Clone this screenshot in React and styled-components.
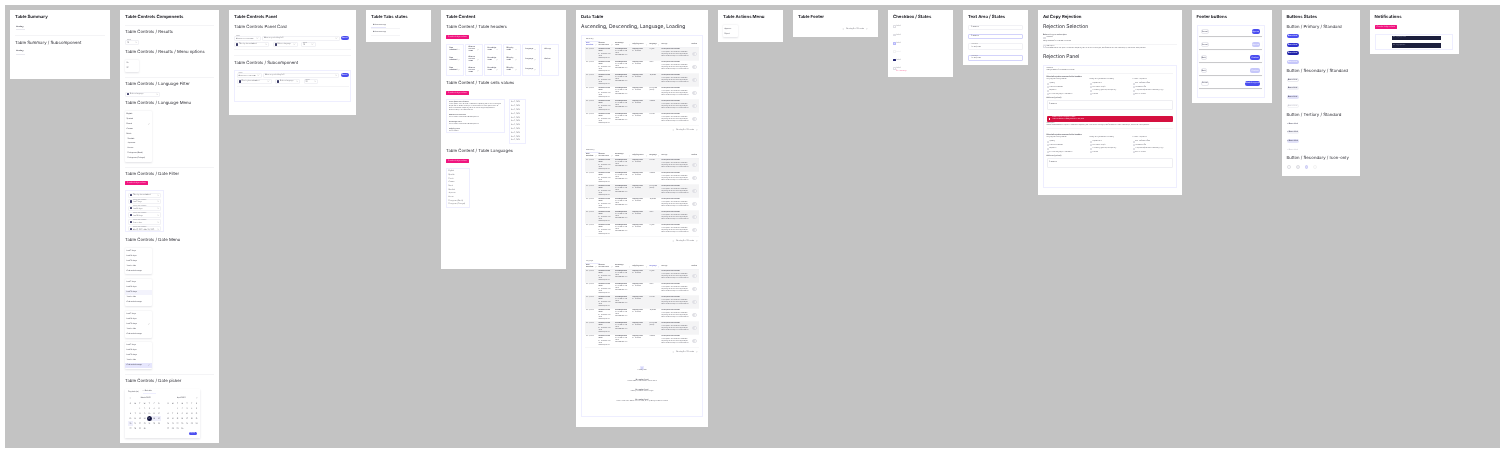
import React from 'react';
import styled, { createGlobalStyle, css } from 'styled-components';
import { ChevronDown, ChevronLeft, ChevronRight, Check, MoreHorizontal, Loader } from 'lucide-react';

const Global = createGlobalStyle`
  html, body { margin: 0; padding: 0; background: #fff; overflow: hidden; }
  * { box-sizing: border-box; }
  body {
    font-family: Inter, "Liberation Sans", sans-serif;
    color: #1b1b22;
    text-rendering: geometricPrecision;
  }
`;

const LAVENDER = '#eeeeff';
const BLUE = '#4a4df0';
const PINK = '#f0157f';
const INK = '#1c1f3d';
const SMALL = '#32323e';

const top = css`
  margin-top: ${(p) => p.$mt || 0}px;
`;

// the whole board is a zoomed out design file, so everything sits slightly soft
const Canvas = styled.main`
  margin: 5px;
  width: 1495px;
  height: 443px;
  padding: 5px;
  background: #c3c3c3;
  display: flex;
  gap: 10px;
  align-items: flex-start;
  overflow: hidden;
  filter: blur(0.3px);
`;
const Frame = styled.section`
  width: ${(p) => p.$w}px;
  height: ${(p) => p.$h}px;
  flex: none;
  padding: 5px;
  background: #fff;
  display: flex;
  flex-direction: column;
  align-items: flex-start;
`;
const Title = styled.h2`
  margin: 0;
  font-size: 4.3px;
  line-height: 5px;
  font-weight: 700;
  white-space: nowrap;
`;
const Section = styled.h3`
  ${top}
  margin-bottom: 0;
  font-size: 4.3px;
  line-height: 5px;
  font-weight: 400;
  color: #2c2c34;
  white-space: nowrap;
`;
const BigSection = styled(Section)`
  font-size: 5px;
`;
const Rule = styled.hr`
  ${top}
  margin-bottom: 0;
  margin-left: 0;
  margin-right: 0;
  border: 0;
  height: 1px;
  width: ${(p) => (p.$w ? `${p.$w}px` : '100%')};
  flex: none;
  background: #f4f4f6;
`;
const Mini = styled.span`
  ${top}
  display: block;
  padding-left: ${(p) => p.$indent || 0}px;
  font-size: ${(p) => p.$size || 1.7}px;
  line-height: ${(p) => (p.$size || 1.7) + 0.5}px;
  font-weight: ${(p) => (p.$bold ? 600 : 400)};
  color: ${(p) => p.$color || SMALL};
  white-space: nowrap;
`;
const Wrap = styled(Mini)`
  white-space: normal;
`;

const NoteTag = styled.div`
  ${top}
  width: 22.5px;
  height: 4px;
  flex: none;
  padding: 0 2px;
  border-radius: 0.5px;
  background: ${PINK};
  display: flex;
  align-items: center;
  gap: 1px;
  color: #fff;
  font-size: 1.6px;
  white-space: nowrap;
`;

const SelectShell = styled.div`
  ${top}
  width: ${(p) => p.$w}px;
  height: ${(p) => p.$h || 5}px;
  flex: none;
  padding: 0 1px;
  background: #fff;
  border: 1px solid #f1f1f5;
  border-radius: 1px;
  display: flex;
  align-items: center;
  gap: 1px;
  svg { flex: none; }
`;
const SelectCopy = styled.div`
  flex: 1;
  min-width: 0;
`;
const CalendarDot = styled.span`
  width: 2px;
  height: 2.2px;
  flex: none;
  border-radius: 0.4px;
  background: #3a3a66;
`;
function Select({ w, h, mt, label, value, dot }) {
  return (
    <SelectShell $w={w} $h={h} $mt={mt}>
      {dot && <CalendarDot />}
      <SelectCopy>
        {label && <Mini $size={1.2} $color="#777782">{label}</Mini>}
        <Mini $size={1.6}>{value}</Mini>
      </SelectCopy>
      <ChevronDown size={2.4} strokeWidth={2} color="#555" />
    </SelectShell>
  );
}

const MenuCard = styled.div`
  ${top}
  width: ${(p) => p.$w}px;
  height: ${(p) => p.$h}px;
  flex: none;
  padding: 1px 0;
  background: #fff;
  border-radius: 1px;
  box-shadow: 0 0.5px 2px rgba(40, 40, 70, 0.14);
  display: flex;
  flex-direction: column;
`;
const MenuItem = styled.div`
  flex: 1;
  padding: 0 1.5px;
  padding-left: ${(p) => (p.$indent ? 2.5 : 1.5)}px;
  display: flex;
  align-items: center;
  justify-content: space-between;
  font-size: 1.7px;
  color: ${SMALL};
  white-space: nowrap;
  background: ${(p) => (p.$state === 'active' ? '#e6e6fd' : p.$state === 'hover' ? '#f3f3fc' : 'transparent')};
`;
function Menu({ w, h, mt, items, hover, active, checked, indentFrom }) {
  return (
    <MenuCard $w={w} $h={h} $mt={mt}>
      {items.map((item, i) => (
        <MenuItem key={item} $indent={indentFrom !== undefined && i >= indentFrom} $state={i === active ? 'active' : i === hover ? 'hover' : ''}>
          {item}
          {(i === checked || i === active) && <Check size={2} strokeWidth={2} color="#555" />}
        </MenuItem>
      ))}
    </MenuCard>
  );
}

const OutlineBox = styled.div`
  ${top}
  width: ${(p) => (p.$w ? `${p.$w}px` : '100%')};
  height: ${(p) => p.$h}px;
  flex: none;
  padding: ${(p) => p.$pad ?? 2}px;
  border: 1px solid ${LAVENDER};
  display: flex;
  flex-direction: column;
  align-items: flex-start;
`;

// table summary
const SummaryBlock = styled.div`
  ${top}
  padding: 0 1px;
`;
const SummaryLine = styled.div`
  margin-top: 1px;
  width: ${(p) => p.$w || 9}px;
  height: 1px;
  flex: none;
  background: ${(p) => p.$color || '#e8e8ee'};
`;
function Summary({ mt }) {
  return (
    <SummaryBlock $mt={mt}>
      <Mini $size={1.8} $bold>Heading</Mini>
      <SummaryLine />
    </SummaryBlock>
  );
}

// date picker
const Picker = styled.div`
  ${top}
  width: 74.5px;
  height: 49.5px;
  flex: none;
  padding: 2px 3px;
  background: #fff;
  box-shadow: 0 0.5px 2px rgba(40, 40, 70, 0.14);
  display: flex;
  flex-direction: column;
`;
const PickerTabs = styled.div`
  display: flex;
  gap: 4px;
  height: 3px;
  align-items: center;
`;
const PickerTab = styled.div`
  padding-bottom: 0.4px;
  border-bottom: ${(p) => (p.$on ? `1px solid ${LAVENDER}` : '0')};
  font-size: 1.7px;
  color: ${SMALL};
  white-space: nowrap;
`;
const Months = styled.div`
  margin-top: 3px;
  display: flex;
  gap: 4.4px;
`;
const Month = styled.div`
  width: 33.3px;
`;
const MonthHead = styled.div`
  height: 3px;
  padding: 0 1px;
  display: flex;
  align-items: center;
  justify-content: space-between;
  font-size: 1.7px;
  color: ${SMALL};
`;
const Days = styled.div`
  margin-top: 1.7px;
  display: grid;
  grid-template-columns: repeat(7, 4.75px);
  grid-auto-rows: 5px;
`;
const Day = styled.div`
  display: flex;
  align-items: center;
  justify-content: center;
  font-size: 1.6px;
  color: ${(p) => (p.$kind === 'start' ? '#fff' : SMALL)};
  background: ${(p) => (p.$kind === 'range' ? '#f0f0fc' : 'transparent')};
  ${(p) => p.$kind === 'start' && css`
    background: #10123d;
    border-radius: 50%;
  `}
`;
const PickerFoot = styled.div`
  margin-top: 0.5px;
  display: flex;
  justify-content: flex-end;
`;
const PICK_WEEK = ['S', 'M', 'T', 'W', 'T', 'F', 'S'];
function CalendarMonth({ name, picked, left }) {
  const cells = [null, null, ...Array.from({ length: 30 }, (_, i) => i + 1)];
  return (
    <Month>
      <MonthHead>
        {left ? <ChevronLeft size={2} /> : <span />}
        <span>{name}</span>
        {!left ? <ChevronRight size={2} /> : <span />}
      </MonthHead>
      <Days>
        {PICK_WEEK.map((d, i) => <Day key={i}>{d}</Day>)}
        {cells.map((d, i) => {
          let kind = '';
          if (picked && d === 17) kind = 'start';
          if (picked && (d === 18 || d === 19 || d === 20)) kind = 'range';
          return <Day key={i} $kind={kind}>{d}</Day>;
        })}
      </Days>
    </Month>
  );
}

// buttons
const kinds = {
  primary: 'background:#4a4df0;color:#fff;',
  primaryHover: 'background:#2f32cf;color:#fff;',
  primaryPress: 'background:#1f22a8;color:#fff;',
  primaryOff: 'background:#c6c7fa;color:#fff;',
  secondary: 'background:#fff;color:#2e2e48;border:1px solid #e8e8ee;',
  secondaryHover: 'background:#f1f1f7;color:#2e2e48;',
  secondaryPress: 'background:#e2e2f8;color:#2e2e48;',
  secondaryOff: 'background:#fff;color:#b9b9c4;border:1px solid #f3f3f6;',
  tertiary: 'background:#fff;color:#2e2e48;',
  tertiaryHover: 'background:#f3f3f8;color:#2e2e48;',
  tertiaryPress: 'background:#e2e2f8;color:#2e2e48;',
  tertiaryOff: 'background:#fff;color:#b9b9c4;',
};
const Button = styled.div`
  ${top}
  width: ${(p) => p.$w || 12}px;
  height: ${(p) => p.$h || 4}px;
  flex: none;
  border-radius: 2px;
  display: flex;
  align-items: center;
  justify-content: center;
  font-size: 1.6px;
  font-weight: 600;
  white-space: nowrap;
  ${(p) => kinds[p.$kind]}
`;
const IconRow = styled.div`
  ${top}
  display: flex;
  gap: 5px;
  padding-left: 0.5px;
`;
const IconButton = styled.div`
  width: 3.8px;
  height: 3.8px;
  border-radius: 50%;
  border: 1px solid ${(p) => p.$line};
  background: ${(p) => p.$fill};
`;

// footer buttons
const FootCard = styled.div`
  ${top}
  width: 62.5px;
  height: 9px;
  flex: none;
  padding: 0 1.5px;
  background: #fff;
  box-shadow: 0 0.7px 0.6px rgba(60, 60, 70, 0.28);
  display: flex;
  align-items: center;
  justify-content: space-between;
`;

// checkbox
const CheckRow = styled.div`
  ${top}
  height: 3px;
  display: flex;
  align-items: center;
  gap: 0.8px;
  position: relative;
`;
const Tick = styled.span`
  width: ${(p) => p.$s || 2.6}px;
  height: ${(p) => p.$s || 2.6}px;
  flex: none;
  border-radius: 0.5px;
  border: 1px solid ${(p) => p.$line || '#dedee4'};
  background: ${(p) => p.$fill || '#fff'};
`;
const ErrorNote = styled.span`
  position: absolute;
  left: 3px;
  top: 2.6px;
  font-size: 1.6px;
  color: #f0417f;
  white-space: nowrap;
`;

// text area
const Field = styled.div`
  ${top}
  width: 55px;
  height: ${(p) => p.$h}px;
  flex: none;
  padding: 0 2px;
  background: #fff;
  border: 1px solid ${(p) => (p.$focus ? '#d3d3fb' : '#f1f1f5')};
  border-radius: 1px;
  display: flex;
  flex-direction: column;
  justify-content: center;
`;

// table
const GRID = '12.5px 16.7px 17.3px 17px 12px 30px 7px';
const TableBlock = styled.div`
  height: 111px;
  flex: none;
  width: 100%;
`;
const TabLabel = styled.div`
  padding-left: 1px;
  width: 15px;
  border-bottom: 1px solid #e9e9fb;
  height: 3px;
`;
const HeadRow = styled.div`
  margin-top: 1.5px;
  height: 5px;
  display: grid;
  grid-template-columns: ${GRID};
  align-items: center;
  border-bottom: 1px solid #f1f1f4;
`;
const HeadCell = styled.div`
  padding-left: 1px;
  display: flex;
  gap: 1px;
  align-items: center;
  font-size: 1.5px;
  line-height: 1.8px;
  font-weight: 600;
  color: ${(p) => (p.$on ? '#3c3cc8' : '#2a2a34')};
  svg { flex: none; margin-left: auto; margin-right: 1px; }
`;
const BodyRow = styled.div`
  height: 13px;
  display: grid;
  grid-template-columns: ${GRID};
  background: ${(p) => (p.$alt ? '#f4f4f5' : '#fff')};
  border-bottom: 1px solid #f7f7f8;
`;
const Cell = styled.div`
  padding: 1.4px 1px 0;
  min-width: 0;
  overflow: hidden;
`;
const ActionCell = styled.div`
  display: flex;
  align-items: center;
  justify-content: center;
  padding-left: 1px;
`;
const RoundAction = styled.div`
  width: 4.5px;
  height: 4.5px;
  border-radius: 50%;
  border: 1px solid #e2e2e8;
  background: #fff;
  display: flex;
  align-items: center;
  justify-content: center;
`;
const Pager = styled.div`
  ${top}
  width: 100%;
  height: 4px;
  display: flex;
  align-items: center;
  gap: 1.4px;
  justify-content: flex-end;
  padding-right: ${(p) => p.$end || 1}px;
  font-size: 1.6px;
  color: ${SMALL};
  white-space: nowrap;
`;
const HEADS = ['Date submitted', 'Abstract account name', 'Knowledge name', 'Shipping name', 'Language', 'Ad copy', 'Actions'];
const COPY = 'Lorem ipsum dolor sit amet consectetur adipiscing elit ut et dolore magna aliqua sed do eiusmod tempor incididunt labore';
function DataTable({ label, langs, sorted }) {
  return (
    <TableBlock>
      <TabLabel><Mini $size={1.5}>{label}</Mini></TabLabel>
      <HeadRow>
        {HEADS.map((h, i) => (
          <HeadCell key={h} $on={i === sorted}>
            <span>{h}</span>
            {i < 5 && <ChevronDown size={1.8} />}
          </HeadCell>
        ))}
      </HeadRow>
      {langs.map((lang, i) => (
        <BodyRow key={i} $alt={i % 2 === 0}>
          <Cell><Mini $size={1.4}>Oct 2, 2024</Mini></Cell>
          <Cell>
            <Wrap $size={1.4} $bold>Abstract account name</Wrap>
            <Wrap $size={1.4} $mt={0.5}>ID: 12345678 Title name ads.example.com</Wrap>
          </Cell>
          <Cell>
            <Wrap $size={1.4} $bold>Knowledge name</Wrap>
            <Wrap $size={1.4}>ID: 12345678 Title name</Wrap>
            <Mini $size={1.4}>www.website.com</Mini>
          </Cell>
          <Cell>
            <Wrap $size={1.4} $bold>Shipping name</Wrap>
            <Wrap $size={1.4}>ID: 12345678</Wrap>
          </Cell>
          <Cell><Wrap $size={1.4}>{lang}</Wrap></Cell>
          <Cell>
            <Mini $size={1.4} $bold>Lorem ipsum dolor sit amet</Mini>
            <Wrap $size={1.4} $mt={0.4}>{COPY}</Wrap>
          </Cell>
          <ActionCell><RoundAction><MoreHorizontal size={2} color="#9a9aa5" /></RoundAction></ActionCell>
        </BodyRow>
      ))}
      <Pager $mt={2}>
        <ChevronLeft size={2} />
        <span>&nbsp;Showing 8 of 20 results&nbsp;</span>
        <ChevronRight size={2} />
      </Pager>
    </TableBlock>
  );
}
const StateLine = styled.div`
  ${top}
  align-self: center;
  text-align: center;
`;
const Spin = styled.div`
  ${top}
  align-self: center;
  height: 4px;
  color: ${BLUE};
  svg { display: block; }
`;

// content frame
const Row = styled.div`
  ${top}
  display: flex;
  align-items: flex-start;
  gap: ${(p) => p.$gap || 0}px;
`;
const HeaderColumn = styled.div`
  width: ${(p) => p.$w || 17.5}px;
  height: 32.5px;
  flex: none;
  padding: 3px 2.5px;
  border: 1px solid ${LAVENDER};
  display: flex;
  flex-direction: column;
  gap: ${(p) => p.$gap || 6}px;
`;
const HeaderChip = styled.div`
  height: 4.5px;
  display: flex;
  align-items: center;
  justify-content: space-between;
  font-size: 1.6px;
  line-height: 1.9px;
  font-weight: 600;
  color: #26263c;
  svg { flex: none; }
`;
const ValueRow = styled.div`
  height: 3.8px;
  display: flex;
  align-items: center;
  font-size: 1.6px;
  color: ${SMALL};
  white-space: nowrap;
`;

// rejection
const ColsRow = styled.div`
  ${top}
  display: grid;
  grid-template-columns: 43px 43px 1fr;
  width: 100%;
`;
const ReasonRow = styled.div`
  margin-top: ${(p) => p.$mt ?? 1.5}px;
  height: 2px;
  display: flex;
  align-items: center;
  gap: 0.8px;
  font-size: 1.5px;
  color: ${SMALL};
  white-space: nowrap;
`;
const Note = styled.div`
  ${top}
  width: 100%;
  height: 10px;
  flex: none;
  padding: 1.5px;
  border: 1px solid #eeeef2;
  border-radius: 1px;
  font-size: 1.6px;
  color: ${SMALL};
`;
const Banner = styled.div`
  ${top}
  width: 100%;
  height: 6px;
  flex: none;
  padding: 0 2px;
  border-radius: 1px;
  background: #d5103f;
  display: flex;
  align-items: center;
  gap: 2px;
  color: #fff;
`;
const BannerMark = styled.span`
  width: 1.8px;
  height: 1.8px;
  flex: none;
  background: #fff;
`;
const Toast = styled.div`
  ${top}
  width: 49px;
  height: 4.5px;
  flex: none;
  margin-left: 15.5px;
  padding: 0 1px;
  background: ${INK};
  display: flex;
  align-items: center;
  font-size: 1.5px;
  color: #b9bbd0;
  white-space: nowrap;
`;

const RESULTS_LANGS = ['English', 'Spanish', 'French', 'German', 'Dutch', 'Swedish', 'Japanese', 'Korean', 'Portuguese (Brazil)', 'Portuguese (Portugal)'];
const DATE_ITEMS = ['Last 7 days', 'Last 14 days', 'Last 30 days', 'Year to date', 'Custom date range'];
const DATE_VALUES = ['Last 7 days', 'Last 14 days', 'Last 30 days', 'Year to date', 'Mar 17, 2022 - Mar 20, 2022'];

const REASONS = [
  ['Language and clarity issues', ['Spelling', 'Grammar mistakes', 'Repetition', 'Incorrect language or translation']],
  ['Quality and guidelines not meeting', ['Capitalization', 'Punctuation and/or', 'Formatting, symbols, and spacing', 'Policies']],
  ['Content compliance', ['Non-verifiable offers', 'Excessive offer', 'Competitors/brands in advertising copy', 'Not on-domain']],
];
function Reasons({ mt }) {
  return (
    <>
      <Mini $mt={mt} $size={1.7} $bold>Select all rejection reasons for the headline</Mini>
      <ColsRow $mt={1.2}>
        {REASONS.map(([head, items]) => (
          <div key={head}>
            <Mini $size={1.5}>{head}</Mini>
            {items.map((r, i) => (
              <ReasonRow key={r} $mt={i === 0 ? 1.6 : 1.5}><Tick $s={2} />{r}</ReasonRow>
            ))}
          </div>
        ))}
      </ColsRow>
      <Mini $mt={2} $size={1.6} $bold>Add note (optional)</Mini>
      <Note $mt={0.8}>Comments</Note>
    </>
  );
}

function ControlsRows({ mt, search = 77.5, account = 26.5, gap = 1.5 }) {
  return (
    <>
      <Row $mt={mt} $gap={gap}>
        <Select w={account} label="Search" value="Abstract account name" />
        <Select w={search} value="What are you looking for?" />
        <Button $w={8} $h={4} $mt={0.5} $kind="primary">Search</Button>
      </Row>
      <Row $mt={1.5} $gap={3.5}>
        <Select w={35} dot value="Filter by date submitted" />
        <Select w={25} dot value="Select a language" />
        <Select w={14.5} label="Results" value="25" />
      </Row>
    </>
  );
}

export default function App() {
  return (
    <>
      <Global />
      <Canvas>
        <Frame $w={100} $h={69}>
          <Title>Table Summary</Title>
          <Summary mt={6} />
          <Rule $mt={5} />
          <Section $mt={5}>Table Summary / Subcomponent</Section>
          <Summary mt={4} />
        </Frame>

        <Frame $w={99} $h={433}>
          <Title>Table Controls Components</Title>
          <Rule $mt={4.5} />
          <Section $mt={4.5}>Table Controls / Results</Section>
          <Select w={14} h={4.5} mt={5} label="Results" value="25" />
          <Section $mt={5}>Table Controls / Results / Menu options</Section>
          <Menu w={14} h={12} mt={5} items={['10', '25']} />
          <Rule $mt={5} />
          <Section $mt={4}>Table Controls / Language Filter</Section>
          <Select w={35} mt={5} dot value="Select a language" />
          <Section $mt={4.5}>Table Controls / Language Menu</Section>
          <Menu w={26.5} h={50.5} mt={5} items={RESULTS_LANGS} checked={2} indentFrom={5} />
          <Rule $mt={5} />
          <Section $mt={4}>Table Controls / Date Filter</Section>
          <NoteTag $mt={4.5}>Contains design variants</NoteTag>
          <OutlineBox $w={39} $h={42} $mt={5} $pad={2}>
            <Select w={33} h={4.5} dot value="Filter by date submitted" />
            {DATE_VALUES.map((v) => (
              <Select key={v} w={33} h={5.5} mt={1.3} dot label="Filter by date submitted" value={v} />
            ))}
          </OutlineBox>
          <Section $mt={5.5}>Table Controls /  Date Menu</Section>
          <Menu w={26.5} h={26.5} mt={5} items={DATE_ITEMS} />
          <Menu w={26.5} h={26.5} mt={5} items={DATE_ITEMS} hover={2} />
          <Menu w={26.5} h={26.5} mt={5.5} items={DATE_ITEMS} checked={2} />
          <Menu w={26.5} h={26.5} mt={4.5} items={DATE_ITEMS} active={4} />
          <Rule $mt={5} />
          <Section $mt={4}>Table Controls / Date picker</Section>
          <Picker $mt={5}>
            <PickerTabs>
              <PickerTab>Plug date (in)</PickerTab>
              <PickerTab $on>&minus;&nbsp; End date &nbsp; &nbsp; &nbsp; &nbsp;</PickerTab>
            </PickerTabs>
            <Months>
              <CalendarMonth name="March 2022" picked left />
              <CalendarMonth name="April 2022" />
            </Months>
            <PickerFoot><Button $w={7.5} $h={3.5} $kind="primary">Apply</Button></PickerFoot>
          </Picker>
        </Frame>

        <Frame $w={127} $h={104.5}>
          <Title>Table Controls Panel</Title>
          <Section $mt={5}>Table Controls Panel Card</Section>
          <ControlsRows mt={5.5} />
          <Rule $mt={1.5} />
          <Rule $mt={5.5} />
          <Section $mt={4.5}>Table Controls / Subcomponent</Section>
          <OutlineBox $mt={4.5} $h={32} $pad={1.5}>
            <ControlsRows account={25} search={76} />
            <Rule $mt={1.5} />
          </OutlineBox>
        </Frame>

        <Frame $w={65} $h={32}>
          <Title>Table Tabs states</Title>
          <Mini $mt={3.5} $size={1.6} $bold $indent={2}>Ad account copy</Mini>
          <SummaryLine $w={15} $color="#e4e4fa" />
          <Rule $mt={0.5} $w={29} />
          <Mini $mt={2} $size={1.6} $bold $indent={2}>Ad account copy</Mini>
          <Rule $mt={2} $w={29} />
        </Frame>

        <Frame $w={125} $h={259}>
          <Title>Table Content</Title>
          <Section $mt={5}>Table Content / Table headers</Section>
          <NoteTag $mt={4.5}>Contains design variants</NoteTag>
          <Row $mt={5} $gap={1.5}>
            {['Date submitted', 'Abstract account name', 'Knowledge name', 'Shipping name', 'Language'].map((h) => (
              <HeaderColumn key={h}>
                {[0, 1, 2].map((i) => <HeaderChip key={i}><span>{h}</span><ChevronDown size={1.8} /></HeaderChip>)}
              </HeaderColumn>
            ))}
            <HeaderColumn $gap={6}>
              <HeaderChip>Ad copy</HeaderChip>
              <HeaderChip>Actions</HeaderChip>
            </HeaderColumn>
          </Row>
          <Section $mt={4.5}>Table Content / Table cells values</Section>
          <NoteTag $mt={5}>Contains design variants</NoteTag>
          <Row $mt={4.5} $gap={4.5}>
            <OutlineBox $w={58.5} $h={34} $pad={2}>
              <Mini $size={1.5} $bold>Lorem ipsum dolor sit amet</Mini>
              <Wrap $size={1.5}>{COPY} {COPY}</Wrap>
              <Mini $mt={2.5} $size={1.5} $bold>Abstract account name</Mini>
              <Mini $size={1.5}>ID: 12345678 Title name ads.example.com</Mini>
              <Mini $mt={3} $size={1.5} $bold>Knowledge name</Mini>
              <Mini $size={1.5}>ID: 12345678 Title name ads.example.com</Mini>
              <Mini $mt={3} $size={1.5} $bold>Shipping name</Mini>
              <Mini $size={1.5}>ID: 12345678</Mini>
            </OutlineBox>
            <OutlineBox $w={17} $h={45} $pad={0.5}>
              {Array.from({ length: 11 }, (_, i) => <ValueRow key={i}>&nbsp;Oct 2, 2024</ValueRow>)}
            </OutlineBox>
          </Row>
          <Section $mt={5}>Table Content / Table Languages</Section>
          <NoteTag $mt={4.5}>Contains design variants</NoteTag>
          <OutlineBox $w={23.5} $h={40.5} $mt={5} $pad={1}>
            {RESULTS_LANGS.map((l) => <ValueRow key={l}>&nbsp;{l}</ValueRow>)}
          </OutlineBox>
        </Frame>

        <Frame $w={132} $h={417}>
          <Title>Data Table</Title>
          <BigSection $mt={5}>Ascending, Descending, Language, Loading</BigSection>
          <OutlineBox $mt={4.5} $h={382} $pad={3}>
            <DataTable label="Ascending" sorted={0} langs={['English', 'Dutch', 'Japanese', 'Portuguese (Brazil)', 'Swedish', 'German']} />
            <DataTable label="Descending" sorted={-1} langs={['German', 'Swedish', 'Portuguese (Brazil)', 'Japanese', 'Dutch', 'English']} />
            <DataTable label="Language" sorted={4} langs={['English', 'Dutch', 'German', 'Japanese', 'Portuguese (Brazil)', 'Swedish']} />
            <Spin $mt={-6}><Loader size={4} strokeWidth={1.5} /></Spin>
            <StateLine><Mini $size={1.5}>Loading data</Mini></StateLine>
            <StateLine $mt={7}>
              <Mini $size={1.6} $bold>No results found</Mini>
              <Mini $size={1.5}>Enter at least 3 characters to find a match</Mini>
            </StateLine>
            <StateLine $mt={6}>
              <Mini $size={1.6} $bold>No results found</Mini>
              <Mini $size={1.5}>Select your search term to begin</Mini>
            </StateLine>
            <StateLine $mt={6}>
              <Mini $size={1.6} $bold>No results found</Mini>
              <Mini $size={1.5}>Enter conditions to search for accounts, fit or update your search criteria</Mini>
            </StateLine>
          </OutlineBox>
        </Frame>

        <Frame $w={65} $h={32}>
          <Title>Table Actions Menu</Title>
          <Menu w={15} h={12} mt={5} items={['Approve', 'Reject']} />
        </Frame>

        <Frame $w={85} $h={27}>
          <Title>Table Footer</Title>
          <Pager $mt={6.5} $end={5}>
            <ChevronLeft size={2} />
            <span>&nbsp;Showing 8 of 20 results&nbsp;</span>
            <ChevronRight size={2} />
          </Pager>
        </Frame>

        <Frame $w={65} $h={67}>
          <Title>Checkbox / States</Title>
          <CheckRow $mt={5}><Tick /><Mini $size={1.6}>Label</Mini></CheckRow>
          <CheckRow $mt={5.4}><Tick $fill="#d9d9e2" /><Mini $size={1.6}>Label</Mini></CheckRow>
          <CheckRow $mt={5.4}><Tick $line="#b7b8fa" $fill="#dcdcfb" /><Mini $size={1.6}>Label</Mini></CheckRow>
          <CheckRow $mt={5.4}><Tick $line="#f3f3f3" /><Mini $size={1.6} $color="#c9c9cf">Label</Mini></CheckRow>
          <CheckRow $mt={5.4}><Tick $line="#1f2170" $fill="#1f2170" /><Mini $size={1.6}>Label</Mini></CheckRow>
          <CheckRow $mt={5.4}><Tick /><Mini $size={1.6}>Label</Mini><ErrorNote>Error message</ErrorNote></CheckRow>
        </Frame>

        <Frame $w={65} $h={55}>
          <Title>Text Area / States</Title>
          <Field $mt={4.5} $h={5}><Mini $size={1.6}>Comments</Mini></Field>
          <Field $mt={4} $h={5} $focus><Mini $size={1.6}>Comments</Mini></Field>
          <Field $mt={4.5} $h={6.5}><Mini $size={1.3} $color="#888">Comments</Mini><Mini $size={1.6}>Lorem ipsum</Mini></Field>
          <Field $mt={5} $h={6} $focus><Mini $size={1.3} $color="#888">Comments</Mini><Mini $size={1.6}>Lorem ipsum</Mini></Field>
        </Frame>

        <Frame $w={143.5} $h={185}>
          <Title>Ad Copy Rejection</Title>
          <BigSection $mt={5}>Rejection Selection</BigSection>
          <Mini $mt={3.6} $size={1.6} $bold>Select ad copy to review reject</Mini>
          <CheckRow $mt={1}><Tick /><Mini $size={1.5}>Headline</Mini></CheckRow>
          <Mini $mt={1} $size={1.5}>Ready Answers for business in minutes</Mini>
          <Rule $mt={1} />
          <CheckRow $mt={0.5}><Tick /><Mini $size={1.5}>Description</Mini></CheckRow>
          <Mini $size={1.5}>Instant answers when it's quiet. Consectetur adipiscing elit. Sit et et dolore magna, sed facilisi eros. Etiam nulla tempor, sollicitudin vitae pharetra.</Mini>
          <BigSection $mt={4.5}>Rejection Panel</BigSection>
          <OutlineBox $mt={5} $h={123.5} $pad={2.5}>
            <Mini $size={1.5}>Headline</Mini>
            <Mini $size={1.5}>Ready Answers for business in minutes</Mini>
            <Rule $mt={1} />
            <Reasons mt={1.5} />
            <Banner $mt={6.2}>
              <BannerMark />
              <div>
                <Mini $size={1.4} $color="#fff">Please include one rejection reason</Mini>
                <Mini $size={1.4} $color="#fff">This is a validation message shown on the panel</Mini>
              </div>
            </Banner>
            <Mini $mt={1.2} $size={1.5}>Description</Mini>
            <Mini $size={1.5}>Instant answers when it's quiet. Consectetur adipiscing elit. Sit et et dolore magna, sed facilisi eros. Etiam nulla tempor, sollicitudin vitae pharetra.</Mini>
            <Rule $mt={1} />
            <Reasons mt={4.5} />
          </OutlineBox>
        </Frame>

        <Frame $w={80} $h={93}>
          <Title>Footer buttons</Title>
          <OutlineBox $mt={4.5} $w={68} $h={73.5} $pad={1.5}>
            <FootCard><Button $w={8.5} $h={5} $kind="secondary">Cancel</Button><Button $w={8.5} $h={5} $kind="primary">Approve</Button></FootCard>
            <FootCard $mt={4}><Button $w={8.5} $h={5} $kind="secondary">Cancel</Button><Button $w={8.5} $h={5} $kind="primaryOff">Approve</Button></FootCard>
            <FootCard $mt={4}><Button $w={6.5} $h={5} $kind="secondary">Back</Button><Button $w={10} $h={5} $kind="primary">Continue</Button></FootCard>
            <FootCard $mt={4}><Button $w={6.5} $h={5} $kind="secondary">Back</Button><Button $w={10} $h={5} $kind="primaryOff">Continue</Button></FootCard>
            <FootCard $mt={3.5}><Button $w={8.5} $h={5} $kind="secondary">Cancel</Button><Button $w={15} $h={5} $kind="primary">Submit for approval</Button></FootCard>
          </OutlineBox>
        </Frame>

        <Frame $w={78} $h={166}>
          <Title>Buttons States</Title>
          <Section $mt={5}>Button / Primary / Standard</Section>
          <Button $mt={4} $kind="primary">Button label</Button>
          <Button $mt={4.5} $kind="primaryHover">Button label</Button>
          <Button $mt={4.5} $kind="primaryPress">Button label</Button>
          <Button $mt={4.5} $kind="primaryOff">Button label</Button>
          <Section $mt={5}>Button / Secondary / Standard</Section>
          <Button $mt={4} $kind="secondary">Button label</Button>
          <Button $mt={4.5} $kind="secondaryHover">Button label</Button>
          <Button $mt={5} $kind="secondaryPress">Button label</Button>
          <Button $mt={4.5} $kind="secondaryOff">Button label</Button>
          <Section $mt={5}>Button / Tertiary / Standard</Section>
          <Button $mt={4} $kind="tertiary">+ Button label</Button>
          <Button $mt={4.5} $kind="tertiaryHover">+ Button label</Button>
          <Button $mt={4.5} $kind="tertiaryPress">+ Button label</Button>
          <Button $mt={5} $kind="tertiaryOff">+ Button label</Button>
          <Section $mt={4.5}>Button / Secondary / Icon-only</Section>
          <IconRow $mt={4}>
            <IconButton $line="#dcdce2" $fill="#fff" />
            <IconButton $line="#dcdce2" $fill="#f1f1f5" />
            <IconButton $line="#c9c9f6" $fill="#dcdcf8" />
            <IconButton $line="#f3f3f3" $fill="#fff" />
          </IconRow>
        </Frame>

        <Frame $w={89} $h={44}>
          <Title>Notifications</Title>
          <NoteTag $mt={5}>Contains design variants</NoteTag>
          <OutlineBox $mt={4.5} $w={78.5} $h={16} $pad={1}>
            <Toast>Ad copy approved</Toast>
            <Toast $mt={3}>Ad copy rejected</Toast>
          </OutlineBox>
        </Frame>
      </Canvas>
    </>
  );
}
